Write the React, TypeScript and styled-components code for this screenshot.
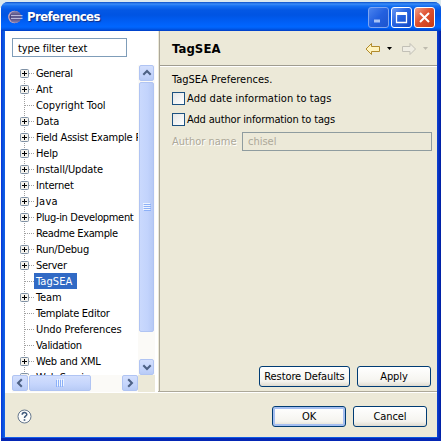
import React from "react";
import styled, { createGlobalStyle, css } from "styled-components";

const Global = createGlobalStyle`
  * { box-sizing: border-box; }
  html, body { margin: 0; padding: 0; }
  body {
    width: 441px;
    height: 443px;
    overflow: hidden;
    background: #fff;
    color: #000;
    font-family: "DejaVu Sans Condensed", "DejaVu Sans", sans-serif;
    font-stretch: condensed;
    font-size: 11px;
  }
`;

const Desktop = styled.div`
  width: 441px;
  height: 443px;
  padding: 2px 0 2px 1px;
  background: linear-gradient(#dbe9ee 0 8px, #fff 8px);
`;

const Dialog = styled.div`
  display: flex;
  flex-direction: column;
  height: 439px;
  padding: 0 4px 4px 4px;
  border-radius: 7px 7px 0 0;
  background: linear-gradient(90deg, #0831d9 0, #0855dd 2px, #1660ea 4px, #0855dd 435px, #0a36c8 437px, #001ea0 440px);
  box-shadow: inset 0 -3px 0 #0526b4;
`;

const TitleBar = styled.header`
  display: flex;
  align-items: center;
  height: 29px;
  flex: none;
  margin: 0 -4px;
  padding: 1px 6px 0 7px;
  border-radius: 7px 7px 0 0;
  background: linear-gradient(#0a4fc9 0, #3a8cf8 2px, #1470f2 4px, #0458e4 8px, #0054e3 13px, #0060f8 21px, #0066ff 25px, #0058e8 27px, #003dc4 29px);
`;

const Title = styled.h1`
  flex: 1;
  margin: 0 0 0 4px;
  font: bold 13px/20px "DejaVu Sans Condensed", "DejaVu Sans", sans-serif;
  font-stretch: condensed;
  letter-spacing: -0.58px;
  color: #fff;
  text-shadow: 1px 1px 1px #0f2b80;
`;

const Captions = styled.div`
  display: flex;
  gap: 2px;
`;

const CaptionButton = styled.button<{ $kind: "dim" | "blue" | "red" }>`
  display: grid;
  place-items: center;
  width: 21px;
  height: 21px;
  padding: 0;
  border: 1px solid ${(p) => (p.$kind === "dim" ? "#7fa5f0" : "#fff")};
  border-radius: 3px;
  background: ${(p) =>
    p.$kind === "dim"
      ? "linear-gradient(135deg, #4a83ee, #2360df 50%, #1d54cd)"
      : p.$kind === "blue"
        ? "linear-gradient(135deg, #6d9bf5, #2663e0 45%, #1548c4)"
        : "linear-gradient(135deg, #f0a08a, #df5130 45%, #c53a16)"};
`;

const Body = styled.div`
  display: grid;
  grid-template-columns: 153px 1fr;
  height: 361px;
  flex: none;
  border-bottom: 1px solid #aca899;
  background: #ece9d8;
`;

const Side = styled.aside`
  padding: 7px 3px 0 7px;
  border-right: 1px solid #fff;
  background: #fff;
  min-width: 0;
`;

const Filter = styled.div`
  width: 115px;
  height: 19px;
  padding-left: 5px;
  border: 1px solid #7f9db9;
  line-height: 19px;
  letter-spacing: -0.1px;
`;

const TreeArea = styled.div`
  display: grid;
  grid-template-columns: 126px 17px;
  grid-template-rows: 310px 17px;
  margin-top: 8px;
`;

const Tree = styled.ul`
  margin: 0;
  padding: 0 0 0 8px;
  list-style: none;
  overflow: hidden;
`;

const TreeRow = styled.li`
  display: flex;
  align-items: center;
  height: 16px;
  white-space: nowrap;
`;

const Branch = styled.svg`
  flex: none;
  width: 14px;
  height: 16px;
`;

const Label = styled.span<{ $selected?: boolean; $track: number }>`
  height: 16px;
  padding: 1px 4px 0 2px;
  line-height: 16px;
  letter-spacing: ${(p) => p.$track}px;
  ${(p) =>
    p.$selected &&
    css`
      padding-right: 5px;
      background: #316ac5;
      color: #fff;
    `}
`;

const Scroll = styled.div<{ $horizontal?: boolean }>`
  display: flex;
  flex-direction: ${(p) => (p.$horizontal ? "row" : "column")};
  justify-content: space-between;
  padding: ${(p) => (p.$horizontal ? "0 0 1px" : "0 1px 0")};
  background: #fbfaf7;
`;

const ScrollTop = styled.div<{ $horizontal?: boolean }>`
  display: flex;
  flex-direction: ${(p) => (p.$horizontal ? "row" : "column")};
  gap: 1px;
`;

const ScrollPiece = styled.div<{ $w: number; $h: number }>`
  display: grid;
  place-items: center;
  width: ${(p) => p.$w}px;
  height: ${(p) => p.$h}px;
  border: 1px solid #b0c4f3;
  border-radius: 2px;
  background: ${(p) =>
    p.$h > 20 ? "linear-gradient(90deg, #cad9fd, #c2d3fc 60%, #b7caf5)" : "linear-gradient(#d3dffd, #c5d5fc 60%, #b8cbf6)"};
`;

const Corner = styled.div`
  background: #ece9d8;
`;

const Page = styled.main`
  display: flex;
  flex-direction: column;
  min-width: 0;
  margin-left: 1px;
  padding-bottom: 5px;
  border-left: 1px solid #aca899;
`;

const PageHeader = styled.div`
  display: flex;
  align-items: center;
  height: 35px;
  flex: none;
  padding: 1px 8px 0 12px;
  border-bottom: 1px solid #9f9c90;
  box-shadow: 0 1px 0 #fff;
`;

const PageTitle = styled.h2`
  flex: 1;
  margin: 0;
  font-size: 13px;
  letter-spacing: 0.1px;
`;

const Form = styled.div`
  padding: 6px 5px 0 12px;
`;

const Description = styled.p`
  margin: 0;
  line-height: 16px;
`;

const CheckRow = styled.div<{ $track: number }>`
  display: flex;
  align-items: center;
  height: 21px;
  letter-spacing: ${(p) => p.$track}px;
`;

const CheckBox = styled.span`
  width: 13px;
  height: 13px;
  margin-right: 2px;
  border: 1px solid #1c5180;
  background: linear-gradient(135deg, #e4e6e6, #fff);
`;

const AuthorRow = styled.div`
  display: flex;
  align-items: center;
  justify-content: space-between;
  margin-top: 2px;
  color: #aca899;
`;

const AuthorLabel = styled.span`
  text-shadow: 1px 1px 0 #fff;
`;

const AuthorField = styled.span`
  width: 190px;
  height: 19px;
  padding-left: 5px;
  border: 1px solid #8f9c9f;
  line-height: 17px;
`;

const PageActions = styled.div`
  display: flex;
  gap: 7px;
  justify-content: flex-end;
  margin: auto 6px 0 0;
`;

const Button = styled.button<{ $w: number; $primary?: boolean }>`
  width: ${(p) => p.$w}px;
  height: 21px;
  padding: 0;
  border: 1px solid #003c74;
  border-radius: 3px;
  background: linear-gradient(#fff, #f5f4ef 75%, #dfdbd0);
  color: #000;
  font: inherit;
  line-height: 18px;
  letter-spacing: -0.1px;
  ${(p) => p.$primary && css`box-shadow: inset 0 0 0 2px #a6bff0;`}
`;

const Footer = styled.footer`
  display: flex;
  align-items: center;
  flex: 1;
  padding: 3px 10px 0 12px;
  border-top: 1px solid #fff;
  background: #ece9d8;
`;

const FooterActions = styled.div`
  display: flex;
  gap: 7px;
  margin-left: auto;
`;

type Item = { name: string; leaf?: boolean; selected?: boolean; track?: number };
const items: Item[] = [
  { name: "General", track: -0.35 },
  { name: "Ant", track: -0.2 },
  { name: "Copyright Tool", leaf: true, track: -0.07 },
  { name: "Data", track: -0.1 },
  { name: "Field Assist Example Preferences", track: -0.22 },
  { name: "Help", track: -0.2 },
  { name: "Install/Update", track: -0.15 },
  { name: "Internet", track: -0.2 },
  { name: "Java", track: 0.2 },
  { name: "Plug-in Development", track: -0.33 },
  { name: "Readme Example", leaf: true, track: -0.35 },
  { name: "Run/Debug", track: -0.2 },
  { name: "Server", track: -0.3 },
  { name: "TagSEA", leaf: true, selected: true, track: 0.1 },
  { name: "Team", track: -0.1 },
  { name: "Template Editor", leaf: true, track: -0.25 },
  { name: "Undo Preferences", leaf: true, track: -0.1 },
  { name: "Validation", leaf: true, track: -0.3 },
  { name: "Web and XML", track: -0.25 },
  { name: "Web Services", track: -0.2 },
];

const BranchIcon = ({ leaf, first }: { leaf?: boolean; first?: boolean }) => (
  <Branch viewBox="0 0 14 16">
    <path d={first ? "M4.5 8V16" : "M4.5 0V16"} stroke="#a0a0a0" strokeDasharray="1 1" />
    <path d="M5 8.5H14" stroke="#a0a0a0" strokeDasharray="1 1" />
    {!leaf && (
      <>
        <rect x="0.5" y="4.5" width="8" height="8" rx="1" fill="#f4f2ec" stroke="#7f91a5" />
        <path d="M2 8.5H7M4.5 6V11" stroke="#000" />
      </>
    )}
  </Branch>
);

const Chevron = ({ turn }: { turn: number }) => (
  <svg width="10" height="10" viewBox="0 0 10 10">
    <path d="M1.3 6.8L5 3.1L8.7 6.8" fill="none" stroke="#4d6185" strokeWidth="2.1" transform={`rotate(${turn} 5 5)`} />
  </svg>
);

const Grip = ({ turn = 0 }: { turn?: number }) => (
  <svg width="8" height="8" viewBox="0 0 8 8">
    <g transform={`rotate(${turn} 4 4)`}>
      <path d="M0 .5H7M0 2.5H7M0 4.5H7M0 6.5H7" stroke="#eef4fe" />
      <path d="M1 1.5H8M1 3.5H8M1 5.5H8M1 7.5H8" stroke="#8cb0f8" />
    </g>
  </svg>
);

const EclipseLogo = () => (
  <svg width="15" height="14" viewBox="0 0 15 14">
    <defs>
      <linearGradient id="globe" x2="0" y2="1">
        <stop stopColor="#8a84ab" />
        <stop offset=".5" stopColor="#3d3873" />
        <stop offset="1" stopColor="#8d85b3" />
      </linearGradient>
    </defs>
    <circle cx="6.4" cy="7" r="6.2" fill="#d3aebb" />
    <circle cx="7.4" cy="7" r="6" fill="url(#globe)" />
    <path d="M3 5.7H14.5M3 8.3H14.5" stroke="#d3d4ee" strokeWidth="1" />
  </svg>
);

const HistoryArrows = () => (
  <svg width="64" height="16" viewBox="0 0 64 16">
    <path d="M1 8L6.5 2.5V5.5H14.5V10.5H6.5V13.5Z" fill="#fff3bd" stroke="#b18a2b" />
    <path d="M22 6H27L24.5 9Z" fill="#000" />
    <path d="M50.5 8L45 2.5V5.5H37.5V10.5H45V13.5Z" fill="#efede3" stroke="#c2c0b6" />
    <path d="M58 6H63L60.5 9Z" fill="#bebbae" />
  </svg>
);

const HelpIcon = () => (
  <svg width="15" height="15" viewBox="0 0 15 15">
    <circle cx="7.5" cy="7.5" r="6.5" fill="#fcfcfa" stroke="#65778d" />
    <path d="M5.2 5.8C5.2 2.9 9.8 2.9 9.8 5.5C9.8 7 7.5 7 7.5 9" fill="none" stroke="#415b7c" strokeWidth="1.5" />
    <path d="M6.7 10.2H8.3V11.8H6.7Z" fill="#415b7c" />
  </svg>
);

export default function App() {
  return (
    <Desktop>
      <Global />
      <Dialog>
        <TitleBar>
          <EclipseLogo />
          <Title>Preferences</Title>
          <Captions>
            <CaptionButton $kind="dim" aria-label="Minimize">
              <svg width="13" height="13"><path d="M2 10H8" stroke="#a8c2f6" strokeWidth="3" /></svg>
            </CaptionButton>
            <CaptionButton $kind="blue" aria-label="Maximize">
              <svg width="13" height="13"><path d="M1.5 2V11.5H11.5V2M1 2.5H12" fill="none" stroke="#fff" strokeWidth="1.3" /><path d="M1 2.5H12" stroke="#fff" strokeWidth="3" /></svg>
            </CaptionButton>
            <CaptionButton $kind="red" aria-label="Close">
              <svg width="13" height="13"><path d="M2 2L11 11M11 2L2 11" stroke="#fff" strokeWidth="2" /></svg>
            </CaptionButton>
          </Captions>
        </TitleBar>
        <Body>
          <Side>
            <Filter>type filter text</Filter>
            <TreeArea>
              <Tree>
                {items.map((item, i) => (
                  <TreeRow key={item.name}>
                    <BranchIcon leaf={item.leaf} first={i === 0} />
                    <Label $selected={item.selected} $track={item.track ?? 0}>{item.name}</Label>
                  </TreeRow>
                ))}
              </Tree>
              <Scroll>
                <ScrollTop>
                  <ScrollPiece $w={15} $h={16}><Chevron turn={0} /></ScrollPiece>
                  <ScrollPiece $w={15} $h={250}><Grip /></ScrollPiece>
                </ScrollTop>
                <ScrollPiece $w={15} $h={16}><Chevron turn={180} /></ScrollPiece>
              </Scroll>
              <Scroll $horizontal>
                <ScrollTop $horizontal>
                  <ScrollPiece $w={16} $h={16}><Chevron turn={-90} /></ScrollPiece>
                  <ScrollPiece $w={62} $h={16}><Grip turn={90} /></ScrollPiece>
                </ScrollTop>
                <ScrollPiece $w={16} $h={16}><Chevron turn={90} /></ScrollPiece>
              </Scroll>
              <Corner />
            </TreeArea>
          </Side>
          <Page>
            <PageHeader>
              <PageTitle>TagSEA</PageTitle>
              <HistoryArrows />
            </PageHeader>
            <Form>
              <Description>TagSEA Preferences.</Description>
              <CheckRow $track={0.07}><CheckBox />Add date information to tags</CheckRow>
              <CheckRow $track={-0.16}><CheckBox />Add author information to tags</CheckRow>
              <AuthorRow>
                <AuthorLabel>Author name</AuthorLabel>
                <AuthorField>chisel</AuthorField>
              </AuthorRow>
            </Form>
            <PageActions>
              <Button $w={91}>Restore Defaults</Button>
              <Button $w={74}>Apply</Button>
            </PageActions>
          </Page>
        </Body>
        <Footer>
          <HelpIcon />
          <FooterActions>
            <Button $w={74} $primary>OK</Button>
            <Button $w={74}>Cancel</Button>
          </FooterActions>
        </Footer>
      </Dialog>
    </Desktop>
  );
}
